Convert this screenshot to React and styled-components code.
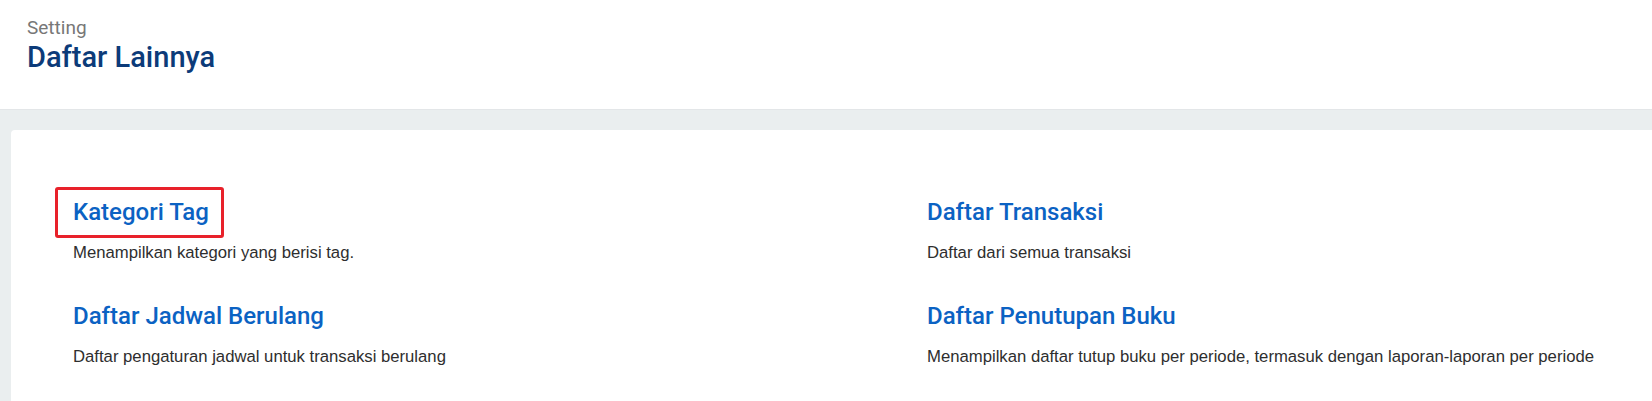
import React from "react";
import styled, { createGlobalStyle } from "styled-components";

const Global = createGlobalStyle`
  html, body { margin: 0; padding: 0; background: #eaeeef; }
  body { font-family: Roboto, "Liberation Sans", sans-serif; overflow: hidden; }
`;

const Header = styled.header`
  background: #ffffff;
  height: 110px;
  box-sizing: border-box;
  padding: 16px 27px 0;
  border-bottom: 1px solid #e3e6e8;
`;

const Crumb = styled.div`
  font-size: 19px;
  line-height: 24px;
  color: #777777;
`;

const PageTitle = styled.h1`
  margin: 0;
  font-size: 29px;
  line-height: 34px;
  font-weight: 500;
  color: #0c3b79;
`;

const Body = styled.main`
  padding: 20px 0 0 11px;
`;

const Card = styled.section`
  background: #ffffff;
  border-radius: 4px 0 0 0;
  min-height: 271px;
  box-sizing: border-box;
  padding: 68px 0 0 62px;
  display: grid;
  grid-template-columns: 854px 1fr;
  align-content: start;
  row-gap: 39px;
`;

const Item = styled.div`
  position: relative;
`;

const ItemTitle = styled.a`
  display: inline-block;
  font-family: Roboto, sans-serif;
  font-size: 24px;
  line-height: 28px;
  font-weight: 500;
  color: #0b62c3;
  text-decoration: none;
`;

const Highlight = styled.span`
  position: absolute;
  left: -18px;
  top: -11px;
  width: 169px;
  height: 51px;
  box-sizing: border-box;
  border: 3px solid #e8212a;
  border-radius: 3px;
  pointer-events: none;
`;

const Desc = styled.p`
  margin: 17px 0 0;
  font-family: "Liberation Sans", Arial, sans-serif;
  font-size: 16.7px;
  line-height: 20px;
  color: #2e2e2e;
`;

const items = [
  { title: "Kategori Tag", desc: "Menampilkan kategori yang berisi tag.", highlight: true },
  { title: "Daftar Transaksi", desc: "Daftar dari semua transaksi" },
  { title: "Daftar Jadwal Berulang", desc: "Daftar pengaturan jadwal untuk transaksi berulang" },
  {
    title: "Daftar Penutupan Buku",
    desc: "Menampilkan daftar tutup buku per periode, termasuk dengan laporan-laporan per periode",
  },
];

export default function App() {
  return (
    <>
      <Global />
      <Header>
        <Crumb>Setting</Crumb>
        <PageTitle>Daftar Lainnya</PageTitle>
      </Header>
      <Body>
        <Card>
          {items.map((it) => (
            <Item key={it.title}>
              {it.highlight && <Highlight />}
              <ItemTitle href="#">{it.title}</ItemTitle>
              <Desc>{it.desc}</Desc>
            </Item>
          ))}
        </Card>
      </Body>
    </>
  );
}
